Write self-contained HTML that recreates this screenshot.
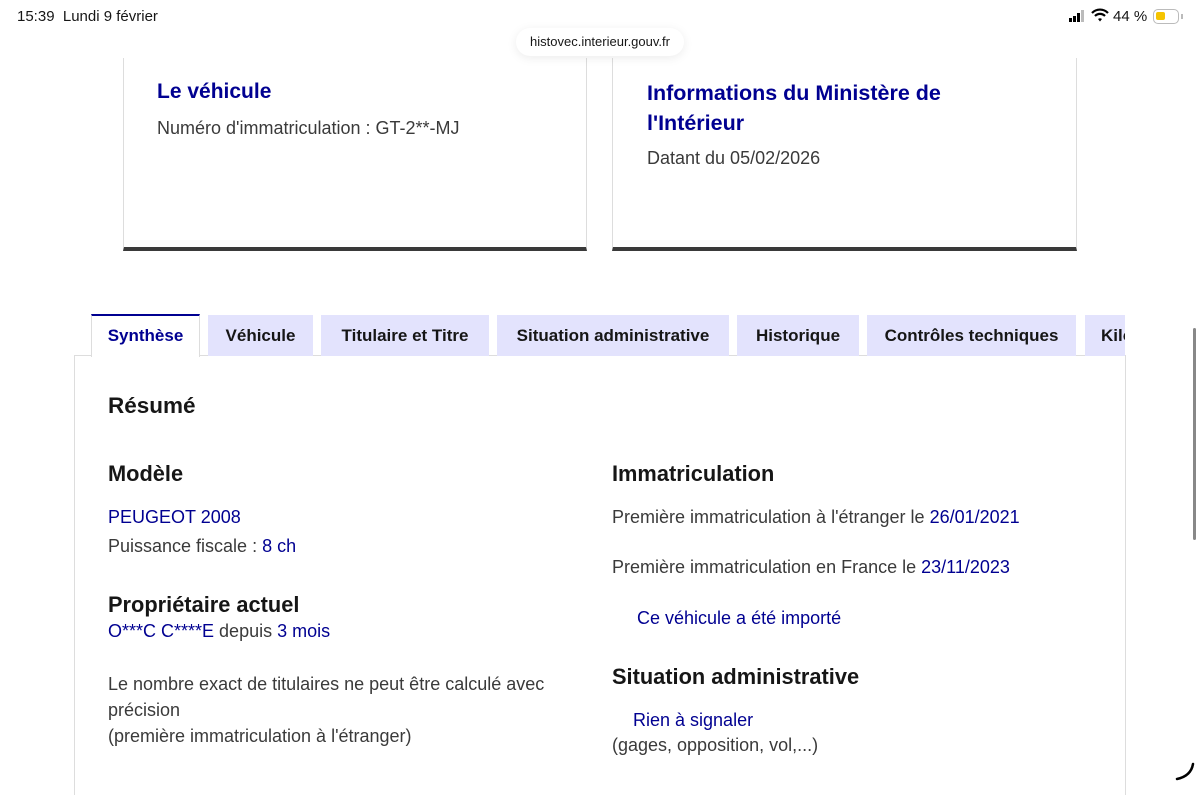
<!DOCTYPE html>
<html><head><meta charset="utf-8"><style>
*{margin:0;padding:0;box-sizing:border-box}
body{width:1200px;height:788px;overflow:hidden;background:#fff;font-family:"Liberation Sans",sans-serif;position:relative;color:#161616}
.a{position:absolute;white-space:nowrap}
.blue{color:#000091}
.card{position:absolute;top:58px;height:193px;border-left:1px solid #ddd;border-right:1px solid #ddd;border-bottom:4px solid #3a3a3a;background:#fff}
.tab{position:absolute;top:315px;height:41px;background:#e3e3fd;font-weight:bold;font-size:17px;line-height:41px;text-align:center;color:#161616}
.t{font-size:18px;color:#3a3a3a}
.h{font-weight:bold;font-size:21.8px}
</style></head><body>
<div class="a" style="left:17px;top:8px;font-size:15px">15:39&nbsp;&nbsp;Lundi 9 février</div>
<div class="a" style="left:1068px;top:10px;">
<svg width="20" height="13"><rect x="1" y="8" width="3" height="4" fill="#000"/><rect x="5" y="6" width="3" height="6" fill="#000"/><rect x="9" y="3" width="3" height="9" fill="#000"/><rect x="13" y="0" width="3" height="12" fill="#bbb"/></svg></div>
<div class="a" style="left:1091px;top:8px;"><svg width="18" height="15" viewBox="0 0 18 15"><path d="M1 5 A11 11 0 0 1 17 5" stroke="#000" stroke-width="2.2" fill="none"/><path d="M4 8 A7 7 0 0 1 14 8" stroke="#000" stroke-width="2.2" fill="none"/><path d="M7 11 L9 13.5 L11 11 A3 3 0 0 0 7 11Z" fill="#000"/></svg></div>
<div class="a" style="left:1113px;top:8px;font-size:15px">44 %</div>
<div class="a" style="left:1153px;top:9px;width:26px;height:15px;border:1.5px solid #bbb;border-radius:5px"><div style="position:absolute;left:2px;top:2px;width:9px;height:8px;background:#f5c400;border-radius:2px"></div></div>
<div class="a" style="left:1181px;top:14px;width:2px;height:5px;background:#bbb"></div>

<div class="card" style="left:123px;width:464px"></div>
<div class="card" style="left:612px;width:465px"></div>
<div class="a" style="left:516px;top:28px;width:168px;height:28px;background:#fff;border-radius:14px;box-shadow:0 2px 10px rgba(0,0,0,.08);font-size:13px;text-align:center;line-height:28px">histovec.interieur.gouv.fr</div>

<div class="a blue" style="left:157px;top:80px;font-size:21px;font-weight:bold">Le véhicule</div>
<div class="a t" style="left:157px;top:118px">Numéro d'immatriculation : GT-2**-MJ</div>
<div class="a blue" style="left:647px;top:78px;font-size:21.5px;font-weight:bold;line-height:30px;white-space:normal;width:330px">Informations du Ministère de l'Intérieur</div>
<div class="a t" style="left:647px;top:148px">Datant du 05/02/2026</div>

<div class="a" style="left:74px;top:355px;width:1052px;height:440px;border:1px solid #ddd;border-bottom:none"></div>
<div class="tab" style="left:91px;width:109px;top:314px;height:43px;background:#fff;border-top:2px solid #000091;border-left:1px solid #ddd;border-right:1px solid #ddd;color:#000091;line-height:40px">Synthèse</div>
<div class="tab" style="left:208px;width:105px">Véhicule</div>
<div class="tab" style="left:321px;width:168px">Titulaire et Titre</div>
<div class="tab" style="left:497px;width:232px">Situation administrative</div>
<div class="tab" style="left:737px;width:122px">Historique</div>
<div class="tab" style="left:867px;width:209px">Contrôles techniques</div>
<div class="tab" style="left:1085px;width:40px;text-align:left;padding-left:16px;overflow:hidden">Kilo</div>

<div class="a" style="left:108px;top:393px;font-size:22.5px;font-weight:bold">Résumé</div>
<div class="a h" style="left:108px;top:461px">Modèle</div>
<div class="a t blue" style="left:108px;top:507px;color:#000091">PEUGEOT 2008</div>
<div class="a t" style="left:108px;top:536px">Puissance fiscale : <span class="blue">8 ch</span></div>
<div class="a h" style="left:108px;top:592px">Propriétaire actuel</div>
<div class="a t" style="left:108px;top:621px"><span class="blue">O***C C****E</span> depuis <span class="blue">3 mois</span></div>
<div class="a t" style="left:108px;top:671px;line-height:26px">Le nombre exact de titulaires ne peut être calculé avec<br>précision<br>(première immatriculation à l'étranger)</div>

<div class="a h" style="left:612px;top:461px">Immatriculation</div>
<div class="a t" style="left:612px;top:507px">Première immatriculation à l'étranger le <span class="blue">26/01/2021</span></div>
<div class="a t" style="left:612px;top:557px">Première immatriculation en France le <span class="blue">23/11/2023</span></div>
<div class="a t blue" style="left:637px;top:608px;color:#000091">Ce véhicule a été importé</div>
<div class="a h" style="left:612px;top:664px">Situation administrative</div>
<div class="a t blue" style="left:633px;top:710px;color:#000091">Rien à signaler</div>
<div class="a t" style="left:612px;top:735px">(gages, opposition, vol,...)</div>

<div class="a" style="left:1193px;top:328px;width:3px;height:212px;background:#888;border-radius:2px"></div>
<div class="a" style="left:1174px;top:760px"><svg width="22" height="22"><path d="M3 19 Q17 16 19 4" stroke="#000" stroke-width="2.5" fill="none" stroke-linecap="round"/></svg></div>
</body></html>
